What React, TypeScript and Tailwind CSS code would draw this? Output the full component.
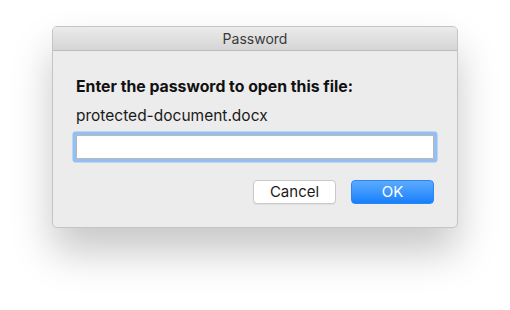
const PasswordDialog = () => {
  return (
    <div
      className="w-[510px] h-[310px] bg-white pt-[26px] flex flex-col items-center"
      style={{ fontFamily: 'Inter, "Liberation Sans", Arial, sans-serif' }}
    >
      <div className="w-[406px] rounded-[5px] border border-[#c4c4c4] bg-[#ececec] shadow-[0_24px_40px_rgba(0,0,0,0.22)] overflow-hidden">
        <div className="h-[24px] border-b border-[#bdbdbd] bg-gradient-to-b from-[#ebebeb] to-[#d5d5d5] flex items-center justify-center">
          <span className="text-[14px] text-[#3a3a3a]">Password</span>
        </div>
        <div className="px-[23px] pt-[27px] pb-[23px] flex flex-col">
          <div className="text-[15.8px] leading-[18px] font-bold text-[#111]">
            Enter the password to open this file:
          </div>
          <div className="mt-[11px] text-[15.5px] leading-[18px] text-[#1a1a1a]">
            protected-document.docx
          </div>
          <input
            type="password"
            className="mt-[10px] h-[24px] w-full bg-white border border-[#b8b8b8] outline-none shadow-[0_0_0_3.5px_#94bff3] rounded-[1px]"
          />
          <div className="mt-[21px] flex justify-end gap-[15px]">
            <button className="w-[83px] h-[24px] rounded-[4px] bg-white border border-[#c9c9c9] text-[15px] text-[#1a1a1a] shadow-[0_1px_1px_rgba(0,0,0,0.06)]">
              Cancel
            </button>
            <button className="w-[83px] h-[24px] rounded-[4px] bg-gradient-to-b from-[#5aabff] to-[#157ffb] border border-[#2b86f5] text-[15px] text-white">
              OK
            </button>
          </div>
        </div>
      </div>
    </div>
  );
};

export default function App() {
  return <PasswordDialog />;
}
